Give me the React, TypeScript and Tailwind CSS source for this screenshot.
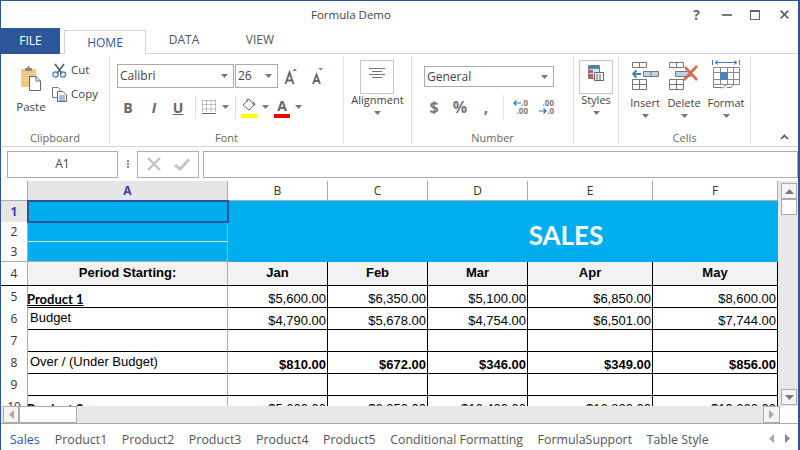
import React from 'react';

const ui = "font-['Open_Sans','Noto_Sans',sans-serif]";

const Caret = ({ className = '' }: { className?: string }) => (
  <svg width="7" height="4" viewBox="0 0 7 4" className={className}>
    <path d="M0 0H7L3.5 4Z" fill="#777" />
  </svg>
);

const GroupLabel = ({ children }: { children: string }) => (
  <div className="mt-auto h-[12px] text-center text-[11px] leading-[12px] text-[#666]">{children}</div>
);

const PasteIcon = () => (
  <svg width="20" height="25" viewBox="0 0 20 25">
    <path d="M0 3H15V21H0Z" fill="#eccb84" />
    <path d="M4 2H6L7 0H8L9 2H11V5H4Z" fill="#8a8a8a" />
    <path d="M8.5 10.5H15L19.5 15V24.5H8.5Z" fill="#fff" stroke="#666" />
    <path d="M15 10.5V15H19.5" fill="none" stroke="#666" />
  </svg>
);

const CutIcon = () => (
  <svg width="15" height="15" viewBox="0 0 15 15">
    <path d="M3 1L10 10.5M12 1L5 10.5" stroke="#666" strokeWidth="1.8" />
    <circle cx="3.5" cy="11.5" r="2.6" fill="none" stroke="#3f7fb8" strokeWidth="1.3" />
    <circle cx="11" cy="11.5" r="2.6" fill="none" stroke="#3f7fb8" strokeWidth="1.3" />
  </svg>
);

const CopyIcon = () => (
  <svg width="15" height="15" viewBox="0 0 15 15">
    <path d="M.5.5H6L8 2.5V10.5H.5Z" fill="#fff" stroke="#777" />
    <path d="M5.5 4.5H11L14.5 8V14.5H5.5Z" fill="#fff" stroke="#666" />
    <path d="M7 9H13M7 11H13M7 13H13" stroke="#3f7fb8" />
  </svg>
);

const GrowFont = ({ shrink = false }: { shrink?: boolean }) => (
  <svg width="14" height="18" viewBox="0 0 14 18">
    {shrink ? (
      <path d="M3 17L6.5 7.5L10 17M4.2 14H8.8" fill="none" stroke="#666" strokeWidth="1.8" />
    ) : (
      <path d="M1.5 17L5.5 5.5L9.5 17M3 13.5H8" fill="none" stroke="#666" strokeWidth="1.9" />
    )}
    <path d={shrink ? 'M8.5 1H13L10.7 3.5Z' : 'M8.5 4H13L10.7 1.5Z'} fill="#4a86bd" />
  </svg>
);

const BordersIcon = () => (
  <svg width="14" height="14" viewBox="0 0 14 14">
    <path d="M0.5 0.5H13.5M0.5 4.5H13.5M0.5 9H13.5M0.5 0.5V12M4.5 0.5V12M9 0.5V12M13.5 0.5V12" stroke="#888" strokeDasharray="1 1" fill="none" />
    <path d="M0 13.5H14" stroke="#666" />
  </svg>
);

const FillIcon = () => (
  <svg width="16" height="17" viewBox="0 0 16 17">
    <path d="M2 8L8 2L13 8L8 13Z" fill="#fff" stroke="#666" />
    <path d="M6 1.5V5" stroke="#666" />
    <path d="M11.5 4.5C14 5 14.5 7 14 9L12.5 7Z" fill="#3f7fb8" />
  </svg>
);

const AlignIcon = () => (
  <svg width="16" height="11" viewBox="0 0 16 11">
    <path d="M0 .5H16M3 3.5H13M0 6.5H16M3 9.5H13" stroke="#777" />
  </svg>
);

const ArrowLeft = () => (
  <svg width="8" height="6" viewBox="0 0 8 6"><path d="M8 3H1M3.5.5L1 3L3.5 5.5" fill="none" stroke="#2f75b5" strokeWidth="1.2" /></svg>
);

const ArrowRight = () => (
  <svg width="8" height="6" viewBox="0 0 8 6"><path d="M0 3H7M4.5.5L7 3L4.5 5.5" fill="none" stroke="#2f75b5" strokeWidth="1.2" /></svg>
);

const DecimalIcon = ({ increase }: { increase: boolean }) => (
  <div className="flex h-[16px] w-[16px] flex-col items-end text-[8px] font-bold leading-[8px] text-[#777]">
    <div className="flex h-[8px] items-center">
      {increase && <ArrowLeft />}
      <span>{increase ? '.0' : '.00'}</span>
    </div>
    <div className="flex h-[8px] items-center">
      {!increase && <ArrowRight />}
      <span>{increase ? '.00' : '.0'}</span>
    </div>
  </div>
);

const StylesIcon = () => (
  <svg width="16" height="16" viewBox="0 0 16 16">
    <path d="M.5.5H11.5V13.5H.5Z" fill="#dbe6f3" stroke="#777" />
    <path d="M1 1H11V4H1Z" fill="#4a86bd" />
    <path d="M1 5H5V8H1Z" fill="#d9534f" />
    <path d="M1 9H5V13H1Z" fill="#d9534f" />
    <path d="M6.5 7.5H15.5V15.5H6.5Z" fill="#fff" stroke="#666" />
    <path d="M8 10H14M8 12H14M8 14H14" stroke="#555" strokeDasharray="2 1" />
  </svg>
);

const InsertIcon = () => (
  <svg width="27" height="28" viewBox="0 0 27 28">
    <g fill="none" stroke="#777">
      <path d="M.5.5H14.5V5.5H.5ZM7.5.5V5.5" />
      <path d="M.5 17.5H14.5V27.5H.5ZM7.5 17.5V27.5M.5 22.5H14.5" />
    </g>
    <path d="M11.5 9.5H26.5V14.5H11.5Z" fill="#bdd3ea" stroke="#777" />
    <path d="M19 9.5V14.5" stroke="#777" />
    <path d="M1 12H9M4.5 8.5L1 12L4.5 15.5" fill="none" stroke="#3f7fb8" strokeWidth="1.8" />
  </svg>
);

const DeleteIcon = () => (
  <svg width="30" height="28" viewBox="0 0 30 28">
    <g fill="none" stroke="#777">
      <path d="M.5.5H14.5V5.5H.5ZM7.5.5V5.5" />
      <path d="M.5 17.5H14.5V27.5H.5ZM7.5 17.5V27.5M.5 22.5H14.5" />
    </g>
    <path d="M6.5 9.5H21.5V14.5H6.5Z" fill="#bdd3ea" stroke="#777" />
    <path d="M16 5L28 18M28 4L15 18" stroke="#d9694a" strokeWidth="2.6" fill="none" />
  </svg>
);

const FormatIcon = () => (
  <svg width="29" height="31" viewBox="0 0 29 31">
    <path d="M.5 1V6M27.5 1V6M3 3.5H25M6 1.5L3 3.5L6 5.5M22 1.5L25 3.5L22 5.5" fill="none" stroke="#3f7fb8" />
    <path d="M1.5 8.5H27.5V25.5H1.5ZM1.5 13.5H27.5M1.5 20.5H27.5M8.5 8.5V25.5M15.5 8.5V25.5M21.5 8.5V25.5" fill="#fff" stroke="#8a8a8a" />
    <path d="M8 13H16V21H8Z" fill="#4a86bd" />
    <path d="M1.5 25.5V28.5H9C11 30 13 26 15 26M15 28.5H19L21.5 25.5" fill="none" stroke="#777" />
  </svg>
);

const Combo = ({ label, className }: { label: string; className: string }) => (
  <div className={`flex items-center justify-between border border-[#ababab] pl-[2px] pr-[5px] text-[12px] text-[#444] ${className}`}>
    <span>{label}</span>
    <Caret />
  </div>
);

const Sep = ({ className = '' }: { className?: string }) => <div className={`h-[24px] w-px bg-[#e1e1e1] ${className}`} />;

const BigButton = ({ label, icon, pad }: { label: string; icon: React.ReactNode; pad: string }) => (
  <div className="flex flex-col items-center">
    <div className={`flex h-[34px] w-[34px] items-start justify-center border border-[#c6c6c6] ${pad}`}>{icon}</div>
    <span className="mt-[-2px] text-[11px] leading-[16px] text-[#444]">{label}</span>
    <Caret className="mt-[3px]" />
  </div>
);

const CellAction = ({ label, icon, w }: { label: string; icon: React.ReactNode; w: string }) => (
  <div className={`flex flex-col items-center ${w}`}>
    <div className="flex h-[32px] items-end">{icon}</div>
    <span className="mt-[5px] text-[11px] leading-[16px] text-[#444]">{label}</span>
    <Caret className="mt-[3px]" />
  </div>
);

const Ribbon = () => (
  <div className="flex h-[93px] border-b border-[#d4d4d4] pb-[2px] pt-[2px]">
    {/* Clipboard */}
    <div className="flex w-[109px] flex-col border-r border-[#e1e1e1]">
      <div className="flex pl-[15px] pt-[6px]">
        <div className="flex w-[30px] flex-col items-center pt-[4px]">
          <PasteIcon />
          <span className="mt-[8px] text-[11.5px] leading-[16px] text-[#444]">Paste</span>
        </div>
        <div className="ml-[6px] flex flex-col gap-[8px] text-[11.5px] leading-[16px] text-[#444]">
          <div className="flex items-center gap-[4px]"><CutIcon /><span>Cut</span></div>
          <div className="flex items-center gap-[4px]"><CopyIcon /><span>Copy</span></div>
        </div>
      </div>
      <GroupLabel>Clipboard</GroupLabel>
    </div>
    {/* Font */}
    <div className="flex w-[234px] flex-col border-r border-[#e1e1e1]">
      <div className="flex items-center pl-[7px] pt-[8px]">
        <Combo label="Calibri" className="h-[24px] w-[117px]" />
        <Combo label="26" className="ml-[1px] h-[24px] w-[43px]" />
        <div className="ml-[6px]"><GrowFont /></div>
        <div className="ml-[12px]"><GrowFont shrink /></div>
      </div>
      <div className="flex items-center pl-[5px] pt-[7px] text-[14px] text-[#666]">
        <span className="w-[26px] text-center font-bold">B</span>
        <span className="w-[26px] text-center font-bold italic">I</span>
        <span className="w-[22px] text-center font-bold underline">U</span>
        <Sep className="ml-[6px]" />
        <div className="ml-[6px]"><BordersIcon /></div>
        <Caret className="ml-[6px]" />
        <Sep className="ml-[6px]" />
        <div className="ml-[5px] flex flex-col">
          <FillIcon />
          <div className="h-[4px] w-[16px] bg-[#ffff00]" />
        </div>
        <Caret className="ml-[5px]" />
        <div className="ml-[5px] flex flex-col items-center">
          <span className="text-[14px] font-bold leading-[17px] text-[#666]">A</span>
          <div className="h-[4px] w-[16px] bg-[#ff0000]" />
        </div>
        <Caret className="ml-[5px]" />
      </div>
      <GroupLabel>Font</GroupLabel>
    </div>
    {/* Alignment */}
    <div className="flex w-[68px] flex-col items-center border-r border-[#e1e1e1] pt-[4px]">
      <BigButton label="Alignment" icon={<AlignIcon />} pad="pt-[7px]" />
    </div>
    {/* Number */}
    <div className="flex w-[162px] flex-col border-r border-[#e1e1e1]">
      <div className="pl-[12px] pt-[10px]">
        <Combo label="General" className="h-[21px] w-[130px]" />
      </div>
      <div className="flex items-center pl-[11px] pt-[8px] text-[16px] font-bold text-[#777]">
        <span className="w-[22px] text-center">$</span>
        <span className="ml-[4px] w-[22px] text-center">%</span>
        <span className="ml-[4px] w-[22px] text-center">,</span>
        <Sep className="ml-[6px]" />
        <div className="ml-[8px]"><DecimalIcon increase /></div>
        <div className="ml-[10px]"><DecimalIcon increase={false} /></div>
      </div>
      <GroupLabel>Number</GroupLabel>
    </div>
    {/* Styles */}
    <div className="flex w-[45px] flex-col items-center border-r border-[#e1e1e1] pt-[4px]">
      <BigButton label="Styles" icon={<StylesIcon />} pad="pt-[4px]" />
    </div>
    {/* Cells */}
    <div className="flex w-[132px] flex-col border-r border-[#e1e1e1]">
      <div className="flex pl-[6px] pt-[2px]">
        <CellAction label="Insert" icon={<InsertIcon />} w="w-[40px]" />
        <CellAction label="Delete" icon={<DeleteIcon />} w="w-[38px]" />
        <CellAction label="Format" icon={<FormatIcon />} w="w-[46px]" />
      </div>
      <GroupLabel>Cells</GroupLabel>
    </div>
    <div className="flex flex-1 items-end justify-end pb-[4px] pr-[9px]">
      <svg width="9" height="6" viewBox="0 0 9 6">
        <path d="M1 5L4.5 1.5L8 5" fill="none" stroke="#555" strokeWidth="1.6" />
      </svg>
    </div>
  </div>
);

const FormulaBar = () => (
  <div className="flex h-[34px] items-center pb-[3px] pl-[6px] pt-[3px]">
    <div className="flex h-[27px] w-[111px] items-center justify-center border border-[#ababab] text-[12px] text-[#444]">A1</div>
    <div className="ml-[9px] mr-[8px] flex w-[2px] flex-col gap-px">
      <div className="h-[2px] w-[2px] bg-[#888]" />
      <div className="h-[2px] w-[2px] bg-[#888]" />
      <div className="h-[2px] w-[2px] bg-[#888]" />
    </div>
    <div className="flex h-[27px] w-[62px] items-center justify-center gap-[13px] border border-[#ababab]">
      <svg width="14" height="14" viewBox="0 0 14 14"><path d="M1 1L13 13M13 1L1 13" stroke="#c4c4c4" strokeWidth="2.4" /></svg>
      <svg width="16" height="13" viewBox="0 0 16 13"><path d="M1 7L6 11L15 1.5" fill="none" stroke="#c4c4c4" strokeWidth="3" /></svg>
    </div>
    <div className="ml-[4px] h-[27px] flex-1 border border-[#ababab]" />
  </div>
);

const columns = ['B', 'C', 'D', 'E', 'F'];

const sheet: { n: number; label: string; cells: string[]; bold?: boolean; product?: boolean; top?: boolean }[] = [
  { n: 5, label: 'Product 1', product: true, cells: ['$5,600.00', '$6,350.00', '$5,100.00', '$6,850.00', '$8,600.00'] },
  { n: 6, label: 'Budget', top: true, cells: ['$4,790.00', '$5,678.00', '$4,754.00', '$6,501.00', '$7,744.00'] },
  { n: 7, label: '', cells: ['', '', '', '', ''] },
  { n: 8, label: 'Over / (Under Budget)', top: true, bold: true, cells: ['$810.00', '$672.00', '$346.00', '$349.00', '$856.00'] },
  { n: 9, label: '', cells: ['', '', '', '', ''] },
  { n: 10, label: 'Product 2', product: true, cells: ['$5,600.00', '$6,350.00', '$16,400.00', '$16,830.00', '$19,260.00'] },
];

const RowHead = ({ n, className, active }: { n: number; className: string; active?: boolean }) => (
  <div className={`flex items-center justify-center border-r border-[#ababab] font-['Open_Sans',sans-serif] text-[12px] ${active ? 'bg-[#e6e6e6] font-bold text-[#3b3ba0]' : 'text-[#333]'} ${className}`}>{n}</div>
);

const SheetGrid = () => (
  <div className="h-[225px] w-[777px] overflow-hidden font-['Liberation_Sans',Arial,sans-serif] text-[13px] text-black">
    <div className="grid grid-cols-[27px_200px_100px_100px_100px_125px_125px]">
      {/* column headers */}
      <div className="h-[20px] border-b border-r border-[#ababab]" />
      <div className="flex h-[20px] items-center justify-center border-b border-r border-[#ababab] bg-[#e6e6e6] font-['Open_Sans',sans-serif] text-[12px] font-bold text-[#3b3ba0]">A</div>
      {columns.map((c) => (
        <div key={c} className="flex h-[20px] items-center justify-center border-b border-r border-[#ababab] font-['Open_Sans',sans-serif] text-[12px] text-[#333]">{c}</div>
      ))}

      {/* title block */}
      <RowHead n={1} active className="h-[21px]" />
      <div className="relative h-[21px] bg-[#00aeef]">
        <div className="absolute -inset-px z-10 border-2 border-[#2f4f9f]" />
      </div>
      <div className="col-span-5 row-span-3 flex items-center justify-center bg-[#00aeef] pl-[126px] pt-[8px] font-['Lato',sans-serif] text-[26px] font-bold text-white">SALES</div>
      <RowHead n={2} className="h-[20px]" />
      <div className="h-[20px] border-b border-r border-b-[#dcdcdc] border-r-[#ababab] bg-[#00aeef]" />
      <RowHead n={3} className="h-[20px] border-b border-b-[#ababab]" />
      <div className="h-[20px] border-b border-r border-[#ababab] bg-[#00aeef]" />

      {/* header row */}
      <RowHead n={4} className="h-[24px] border-b border-b-black" />
      <div className="flex h-[24px] items-center justify-center border-b border-r border-b-black border-r-[#ababab] bg-[#f2f2f2] pb-[2px] font-bold">Period Starting:</div>
      {['Jan', 'Feb', 'Mar', 'Apr', 'May'].map((m) => (
        <div key={m} className="flex h-[24px] items-center justify-center border-b border-r border-black bg-[#f2f2f2] pb-[2px] font-bold">{m}</div>
      ))}

      {sheet.map((row) => (
        <React.Fragment key={row.n}>
          <RowHead n={row.n} className="h-[22px]" />
          <div className={`flex h-[22px] border-b border-r border-b-black border-r-[#ababab] ${row.top ? 'items-start pl-[2px] pt-[1px]' : 'items-end'}`}>
            <span className={row.product ? "-ml-px font-['Lato',sans-serif] font-bold leading-[16px] underline" : 'leading-[18px]'}>{row.label}</span>
          </div>
          {row.cells.map((v, i) => (
            <div key={i} className={`flex h-[22px] items-end justify-end border-b border-r border-black pb-[1px] pr-[1px] leading-[15px] ${row.bold ? 'font-bold' : ''}`}>{v}</div>
          ))}
        </React.Fragment>
      ))}
    </div>
  </div>
);

const ScrollBtn = ({ dir, className }: { dir: 'up' | 'down' | 'left' | 'right'; className: string }) => {
  const d = { up: 'M0 5H9L4.5 0Z', down: 'M0 0H9L4.5 5Z', left: 'M5 0V9L0 4.5Z', right: 'M0 0V9L5 4.5Z' }[dir];
  const size = dir === 'up' || dir === 'down' ? { width: 9, height: 5 } : { width: 5, height: 9 };
  return (
    <div className={`flex items-center justify-center border border-[#ababab] bg-[#f4f4f4] ${className}`}>
      <svg {...size} viewBox={`0 0 ${size.width} ${size.height}`}><path d={d} fill={dir === 'up' || dir === 'down' ? '#777' : '#aaa'} /></svg>
    </div>
  );
};

const tabs = ['Product1', 'Product2', 'Product3', 'Product4', 'Product5', 'Conditional Formatting', 'FormulaSupport', 'Table Style'];

export default function App() {
  return (
    <div className={`flex h-[450px] w-[800px] flex-col overflow-hidden border-l border-r-2 border-t border-[#2b579a] bg-white ${ui}`}>
      {/* Title bar */}
      <div className="flex h-[27px] items-center pl-[310px] text-[11.5px] text-[#444]">
        <span>Formula Demo</span>
        <div className="ml-auto flex items-center text-[#666]">
          <span className="mr-[22px] text-[14px] font-bold leading-none">?</span>
          <div className="mr-[18px] h-[2px] w-[10px] bg-[#777]" />
          <div className="mr-[20px] h-[10px] w-[10px] border border-t-2 border-[#666]" />
          <svg width="9" height="9" viewBox="0 0 9 9" className="mr-[9px]"><path d="M.7.7L8.3 8.3M8.3.7L.7 8.3" stroke="#666" strokeWidth="1.8" /></svg>
        </div>
      </div>

      {/* Tabs */}
      <div className="flex h-[26px] items-end border-b border-[#d4d4d4] text-[12px]">
        <div className="mb-[-1px] flex h-[26px] w-[59px] items-center justify-center bg-[#2b579a] text-white">FILE</div>
        <div className="mb-[-1px] ml-[4px] flex h-[24px] w-[82px] items-center justify-center border border-b-0 border-[#d4d4d4] bg-white text-[#2b579a]">HOME</div>
        <div className="flex h-[25px] w-[76px] items-center justify-center pb-[1px] text-[#555]">DATA</div>
        <div className="flex h-[25px] w-[76px] items-center justify-center pb-[1px] text-[#555]">VIEW</div>
      </div>

      <Ribbon />
      <FormulaBar />

      {/* Sheet */}
      <div className="flex">
        <SheetGrid />
        <div className="flex h-[225px] w-[20px] flex-col bg-[#e8e8e8] pb-[1px] pl-[3px] pt-[2px]">
          <ScrollBtn dir="up" className="h-[16px] w-[16px]" />
          <div className="h-[16px] w-[16px] border border-[#ababab] bg-white" />
          <ScrollBtn dir="down" className="mt-auto h-[16px] w-[16px]" />
        </div>
      </div>

      {/* Horizontal scrollbar */}
      <div className="flex h-[18px] border-b border-[#ababab]">
        <div className="flex flex-1 bg-[#e8e8e8] pl-[2px]">
          <ScrollBtn dir="left" className="h-[17px] w-[16px]" />
          <div className="h-[17px] w-[58px] border border-[#ababab] bg-white" />
          <ScrollBtn dir="right" className="ml-auto h-[17px] w-[17px]" />
        </div>
        <div className="w-[18px]" />
      </div>

      {/* Sheet tabs */}
      <div className="flex flex-1 items-center pl-[9px] pt-[6px] text-[12.4px] text-[#555]">
        <span className="mr-[15px] text-[#2b579a]">Sales</span>
        <div className="flex gap-[14.5px]">
          {tabs.map((t) => <span key={t}>{t}</span>)}
        </div>
        <div className="ml-auto mr-[8px] mt-[-4px] flex gap-[11px]">
          <svg width="5" height="9" viewBox="0 0 5 9"><path d="M5 0V9L0 4.5Z" fill="#aaa" /></svg>
          <svg width="5" height="9" viewBox="0 0 5 9"><path d="M0 0V9L5 4.5Z" fill="#888" /></svg>
        </div>
      </div>
    </div>
  );
}
